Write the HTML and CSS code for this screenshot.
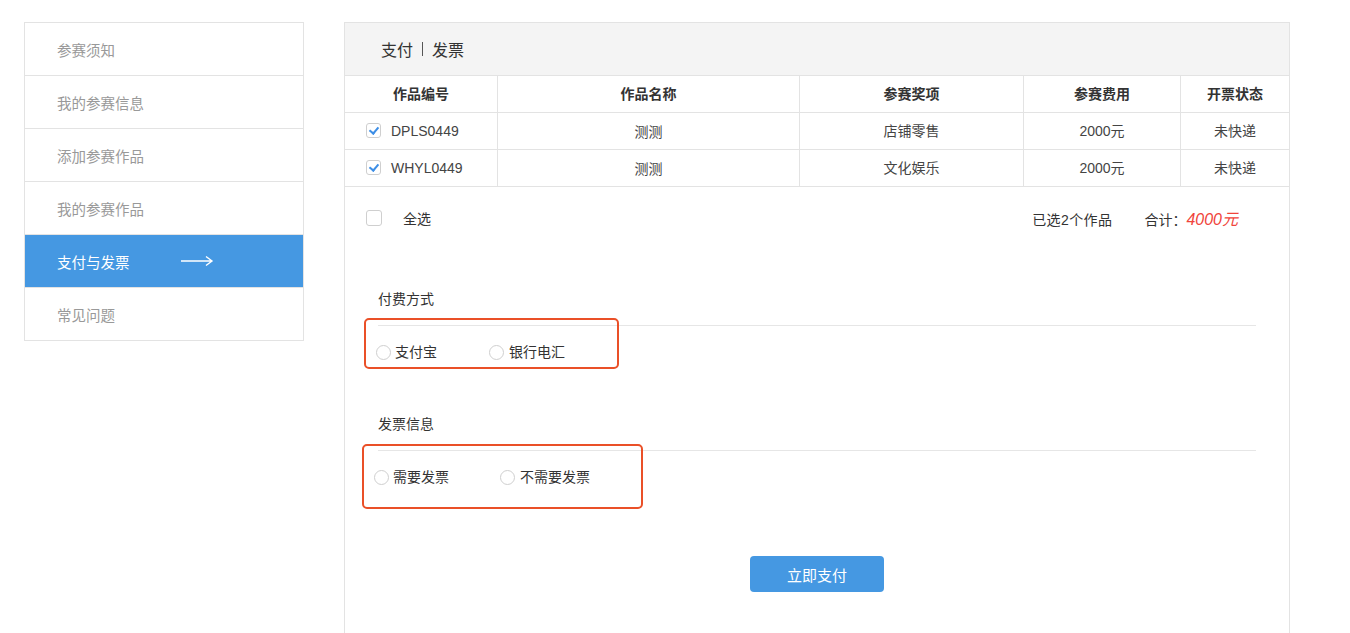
FILE: index.html
```html
<!DOCTYPE html>
<html lang="zh-CN">
<head>
    <meta charset="UTF-8">
    <meta name="viewport" content="width=device-width, initial-scale=1.0">
    <title>支付与发票</title>
    <link rel="stylesheet" href="styles.css">
</head>
<body>
    <div class="page">
        <ul class="side-nav">
            <li class="nav-item">参赛须知</li>
            <li class="nav-item">我的参赛信息</li>
            <li class="nav-item">添加参赛作品</li>
            <li class="nav-item">我的参赛作品</li>
            <li class="nav-item active">
                <span>支付与发票</span>
                <svg class="nav-arrow" width="34" height="12" viewBox="0 0 34 12">
                    <path d="M1 6 H32 M26 1.5 L32 6 L26 10.5" fill="none" stroke="#fff" stroke-width="1.4"/>
                </svg>
            </li>
            <li class="nav-item">常见问题</li>
        </ul>

        <div class="panel">
            <div class="panel-head">支付<span class="sep"></span>发票</div>

            <table class="works">
                <thead>
                    <tr>
                        <th class="col-id">作品编号</th>
                        <th class="col-name">作品名称</th>
                        <th class="col-award">参赛奖项</th>
                        <th class="col-fee">参赛费用</th>
                        <th class="col-state">开票状态</th>
                    </tr>
                </thead>
                <tbody>
                    <tr>
                        <td class="cell-id"><span class="check checked"></span>DPLS0449</td>
                        <td><span class="work-name">测测</span></td>
                        <td>店铺零售</td>
                        <td>2000元</td>
                        <td>未快递</td>
                    </tr>
                    <tr>
                        <td class="cell-id"><span class="check checked"></span>WHYL0449</td>
                        <td><span class="work-name">测测</span></td>
                        <td>文化娱乐</td>
                        <td>2000元</td>
                        <td>未快递</td>
                    </tr>
                </tbody>
            </table>

            <div class="summary">
                <label class="select-all"><span class="check"></span>全选</label>
                <div class="total">
                    <span class="count">已选2个作品</span>
                    <span>合计：<em class="amount">4000元</em></span>
                </div>
            </div>

            <div class="section section-pay">
                <div class="section-title">付费方式</div>
                <div class="options">
                    <label class="option"><span class="radio"></span>支付宝</label>
                    <label class="option"><span class="radio"></span>银行电汇</label>
                </div>
                <div class="mark"></div>
            </div>

            <div class="section section-invoice">
                <div class="section-title">发票信息</div>
                <div class="options">
                    <label class="option"><span class="radio"></span>需要发票</label>
                    <label class="option"><span class="radio"></span>不需要发票</label>
                </div>
                <div class="mark"></div>
            </div>

            <div class="actions">
                <button class="pay-btn">立即支付</button>
            </div>
        </div>
    </div>
</body>
</html>
```

FILE: styles.css
```css
body {
    margin: 0;
    font-family: "Liberation Sans", "Noto Sans CJK SC", sans-serif;
    font-size: 14px;
    color: #333;
    background: #fff;
}

.page {
    display: flex;
    align-items: flex-start;
    gap: 40px;
    padding: 22px 0 0 24px;
}

/* left menu */
.side-nav {
    list-style: none;
    margin: 0;
    padding: 0;
    width: 278px;
    border: 1px solid #e3e3e3;
}

.nav-item {
    display: flex;
    align-items: center;
    height: 52px;
    padding-left: 32px;
    color: #999;
    font-size: 14.5px;
    border-bottom: 1px solid #e3e3e3;
}

.nav-item:last-child {
    border-bottom: none;
}

.nav-item.active {
    background: #4598e2;
    color: #fff;
}

.nav-arrow {
    margin-left: 50px;
}

/* right panel */
.panel {
    width: 944px;
    height: 640px;
    border: 1px solid #e3e3e3;
    border-bottom: none;
}

.panel-head {
    display: flex;
    align-items: center;
    height: 52px;
    padding-left: 36px;
    font-size: 16px;
    color: #333;
    background: #f4f4f4;
    border-bottom: 1px solid #e3e3e3;
}

.sep {
    width: 1px;
    height: 14px;
    margin: 0 9px;
    background: #555;
}

.works {
    width: 100%;
    border-collapse: collapse;
    table-layout: fixed;
}

.works th,
.works td {
    height: 36px;
    padding: 0;
    line-height: 16px;
    text-align: center;
    border-right: 1px solid #e3e3e3;
    border-bottom: 1px solid #e3e3e3;
}

.works th:last-child,
.works td:last-child {
    border-right: none;
}

.works th {
    font-weight: bold;
    color: #333;
}

.works td {
    color: #444;
}

.work-name {
    font-family: "Noto Sans CJK TC", "Noto Sans CJK SC", sans-serif;
    color: #444;
}

.col-id { width: 152px; }
.col-name { width: 301px; }
.col-award { width: 223px; }
.col-fee { width: 156px; }

.works .cell-id {
    text-align: left;
    padding-left: 21px;
}

.check {
    display: inline-block;
    position: relative;
    width: 13px;
    height: 13px;
    border: 1px solid #cfcfcf;
    border-radius: 3px;
    vertical-align: -2px;
    margin-right: 10px;
    background: #fff;
}

.check.checked::after {
    content: "";
    position: absolute;
    left: 4px;
    top: 1px;
    width: 4px;
    height: 7px;
    border: solid #3d8ee6;
    border-width: 0 2px 2px 0;
    transform: rotate(40deg);
}

.summary {
    display: flex;
    align-items: center;
    justify-content: space-between;
    height: 62px;
    padding: 0 51px 2px 21px;
}

.select-all .check {
    width: 14px;
    height: 14px;
    margin-right: 21px;
}

.total {
    display: flex;
    align-items: baseline;
    gap: 32px;
}

.count {
    letter-spacing: 0.4px;
}

.amount {
    color: #f0443b;
    font-size: 16px;
}

/* payment / invoice blocks */
.section {
    position: relative;
    margin: 0 33px;
}

.section-pay {
    padding-top: 38px;
}

.section-invoice {
    padding-top: 52px;
}

.section-title {
    line-height: 20px;
    padding-bottom: 16px;
    border-bottom: 1px solid #e6e6e6;
}

.options {
    display: flex;
    line-height: 20px;
    margin-top: 16px;
}

.option {
    display: flex;
    align-items: center;
}

.radio {
    width: 13px;
    height: 13px;
    border: 1px solid #cfcfcf;
    border-radius: 50%;
    margin-right: 4px;
}

.section-pay .options {
    margin-left: -2px;
}

.section-pay .option + .option {
    margin-left: 52px;
}

.section-pay .option + .option .radio {
    margin-right: 5px;
}

.section-invoice .options {
    margin-left: -4px;
}

.section-invoice .option + .option {
    margin-left: 51px;
}

.section-invoice .option + .option .radio {
    margin-right: 5px;
}

/* red annotation frames */
.mark {
    position: absolute;
    border: 2px solid #ea5028;
    border-radius: 5px;
}

.section-pay .mark {
    left: -14px;
    top: 67px;
    width: 251px;
    height: 47px;
}

.section-invoice .mark {
    left: -16px;
    top: 82px;
    width: 277px;
    height: 61px;
}

.actions {
    display: flex;
    justify-content: center;
    margin-top: 69px;
}

.pay-btn {
    width: 134px;
    height: 36px;
    border: none;
    border-radius: 4px;
    background: #4598e2;
    color: #fff;
    font-family: inherit;
    font-size: 15px;
    cursor: pointer;
}
```
